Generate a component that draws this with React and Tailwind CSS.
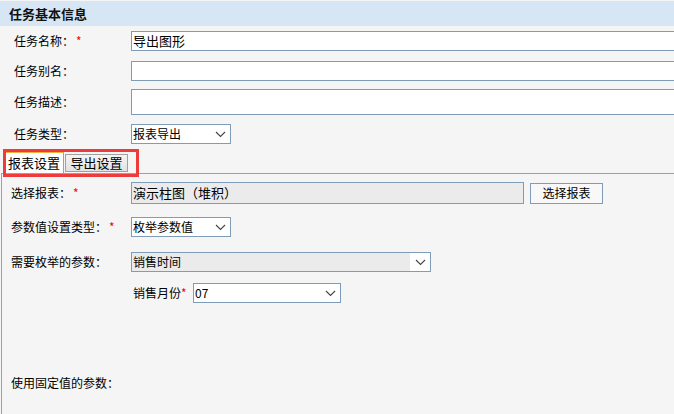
import React from "react";

const font = { fontFamily: '"Microsoft YaHei", "Noto Sans CJK SC", sans-serif' };

function Chevron() {
  return (
    <svg width="11" height="7" viewBox="0 0 11 7" className="shrink-0">
      <path d="M1 1 L5.5 5.5 L10 1" fill="none" stroke="#444" strokeWidth="1.1" />
    </svg>
  );
}

function Select({ value, className, gray }) {
  return (
    <div className={`flex items-center border border-[#7f9db9] bg-white ${className}`}>
      <div className={`flex-1 h-full flex items-center pl-px ${gray ? "bg-[#ebebeb]" : ""}`}>{value}</div>
      <div className="w-[20px] h-full flex items-center justify-center bg-white">
        <Chevron />
      </div>
    </div>
  );
}

function Star() {
  return <span className="text-[#ff0000] ml-[2px]">*</span>;
}

export default function App() {
  return (
    <div className="w-[674px] h-[414px] overflow-hidden bg-[#f5f5f5] text-[12px] text-black" style={font}>
      {/* Header */}
      <div className="mt-px h-[25px] bg-[#d6e6f5] pl-[9px] flex items-center font-bold text-[13px] text-[#111]">
        任务基本信息
      </div>

      {/* Basic info */}
      <div className="pl-[14px] mt-[5px] flex flex-col">
        <div className="flex items-center h-[20px]">
          <div className="w-[117px]">任务名称：<Star /></div>
          <div className="flex-1 h-full border border-[#7f9db9] border-r-0 bg-white flex items-center pl-px text-[13px]">导出图形</div>
        </div>
        <div className="flex items-center h-[20px] mt-[10px]">
          <div className="w-[117px]">任务别名：</div>
          <div className="flex-1 h-full border border-[#7f9db9] border-r-0 bg-white" />
        </div>
        <div className="flex items-center h-[26px] mt-[8px]">
          <div className="w-[117px]">任务描述：</div>
          <div className="flex-1 h-full border border-[#7f9db9] border-r-0 bg-white" />
        </div>
        <div className="flex items-center h-[20px] mt-[9px]">
          <div className="w-[117px]">任务类型：</div>
          <Select value="报表导出" className="w-[100px] h-full" />
        </div>
      </div>

      {/* Tabs */}
      <div className="relative mt-[8px] h-[21px] flex items-end pl-[4px]">
        <div className="h-[21px] w-[60px] bg-white border border-[#a0a0a0] border-b-0 border-t-[#f0b040] flex items-center justify-center text-[13px] z-10">
          报表设置
        </div>
        <div className="h-[18px] w-[63px] ml-px mb-px bg-gradient-to-b from-[#f4f4f4] to-[#e2e2e2] border border-[#a0a0a0] flex items-center justify-center text-[13px]">
          导出设置
        </div>
        <div className="absolute left-[3px] top-[-3px] w-[136px] h-[28px] border-[3px] border-[#ee3b3b] z-20" />
      </div>

      {/* Panel */}
      <div className="border-t border-l border-[#a0a0a0] ml-px h-[260px] pl-[9px] pt-[8px]">
        <div className="flex items-center h-[22px]">
          <div className="w-[120px]">选择报表：<Star /></div>
          <div className="w-[393px] h-full border border-[#7f9db9] bg-[#ebebeb] flex items-center pl-px text-[13px]">演示柱图（堆积）</div>
          <div className="ml-[6px] w-[73px] h-[21px] border border-[#7f9db9] bg-[#f8f8f8] flex items-center justify-center">选择报表</div>
        </div>
        <div className="flex items-center h-[20px] mt-[13px]">
          <div className="w-[120px]">参数值设置类型：<Star /></div>
          <Select value="枚举参数值" className="w-[100px] h-full" />
        </div>
        <div className="flex items-center h-[20px] mt-[15px]">
          <div className="w-[120px]">需要枚举的参数：</div>
          <Select value="销售时间" gray className="w-[300px] h-full" />
        </div>
        <div className="flex items-center h-[20px] mt-[11px] pl-[122px]">
          <div className="w-[60px]">销售月份<span className="text-[#ff0000]">*</span></div>
          <Select value="07" className="w-[148px] h-full" />
        </div>
        <div className="mt-[71px]">使用固定值的参数：</div>
      </div>
    </div>
  );
}
